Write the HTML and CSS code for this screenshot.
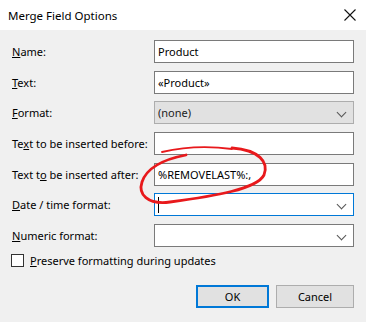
FILE: index.html
```
<!DOCTYPE html>
<html lang="en">
   <head>
      <meta charset="UTF-8">
      <title>Merge Field Options</title>
      <link rel="stylesheet" href="styles.css">
   </head>
   <body>
      <div class="window">
         <div class="titlebar">
            <span class="title">Merge Field Options</span>
            <svg class="close" width="12" height="12" viewBox="0 0 12 12">
               <path d="M0.5 0.5 L11.5 11.5 M11.5 0.5 L0.5 11.5" stroke="#111" stroke-width="1.1" fill="none"/>
            </svg>
         </div>
         <div class="content">
            <div class="fields">
               <span class="label"><u>N</u>ame:</span>
               <div class="field">Product</div>
               <span class="label"><u>T</u>ext:</span>
               <div class="field">«Product»</div>
               <span class="label"><u>F</u>ormat:</span>
               <div class="field select disabled">(none)<span class="chev"></span></div>
               <span class="label">Te<u>x</u>t to be inserted before:</span>
               <div class="field"></div>
               <span class="label">Text t<u>o</u> be inserted after:</span>
               <div class="field">%REMOVELAST%:,</div>
               <span class="label"><u>D</u>ate / time format:</span>
               <div class="field select focus"><span class="caret"></span><span class="chev"></span></div>
               <span class="label"><u>N</u>umeric format:</span>
               <div class="field select"><span class="chev"></span></div>
            </div>
            <div class="check">
               <span class="box"></span>
               <span><u>P</u>reserve formatting during updates</span>
            </div>
            <div class="buttons">
               <div class="btn default">OK</div>
               <div class="btn cancel">Cancel</div>
            </div>
         </div>
         <!-- red hand-drawn ring around the "after" value -->
         <svg class="scribble" width="366" height="322" viewBox="0 0 366 322">
            <path d="M162 152 Q196 144 232 149" stroke="#e8191c" stroke-width="1.8" fill="none" stroke-linecap="round"/>
            <path d="M232 148 C259 150 269 162 264 175 C257 189 215 196 170 202 C147 205 138 194 142 182 C146 170 160 160 186 155" stroke="#e8191c" stroke-width="2.8" fill="none" stroke-linecap="round"/>
         </svg>
      </div>
   </body>
</html>
```
FILE: styles.css
```
body {
margin: 0;
font-family: "Noto Sans", "Open Sans", sans-serif;
font-size: 11px;
color: #000;
}
.window {
position: relative;
width: 366px;
height: 322px;
background: #f0f0f0;
overflow: hidden;
}
.titlebar {
height: 30px;
background: #fff;
display: flex;
align-items: center;
justify-content: space-between;
padding: 0 10px 0 8px;
}
.title {
font-size: 11.5px;
}
.content {
padding: 10px 12px 0 12px;
}
.fields {
display: grid;
grid-template-columns: 142px 200px;
grid-auto-rows: 23px;
row-gap: 7.7px;
}
.label {
line-height: 23px;
white-space: nowrap;
}
.field {
position: relative;
border: 1px solid #7a7a7a;
background: #fff;
display: flex;
align-items: center;
padding-left: 3px;
}
.select.disabled {
background: #e1e1e1;
border-color: #adadad;
color: #222;
}
.focus {
border-color: #0078d7;
}
.caret {
width: 1px;
height: 16px;
background: #000;
}
.chev {
position: absolute;
right: 8px;
top: 7px;
width: 6px;
height: 6px;
border-right: 1px solid #555;
border-bottom: 1px solid #555;
transform: rotate(45deg);
}
.check {
display: flex;
align-items: center;
gap: 6px;
margin-top: 6px;
margin-left: -1px;
}
.box {
width: 11px;
height: 11px;
border: 1px solid #333;
background: #fff;
}
.buttons {
display: flex;
justify-content: flex-end;
gap: 7px;
margin-top: 17px;
}
.btn {
height: 23px;
box-sizing: border-box;
display: flex;
align-items: center;
justify-content: center;
background: #e1e1e1;
border: 1px solid #adadad;
}
.default {
width: 73px;
border: 2px solid #0078d7;
}
.cancel {
width: 78px;
}
.scribble {
position: absolute;
left: 0;
top: 0;
pointer-events: none;
}
```
